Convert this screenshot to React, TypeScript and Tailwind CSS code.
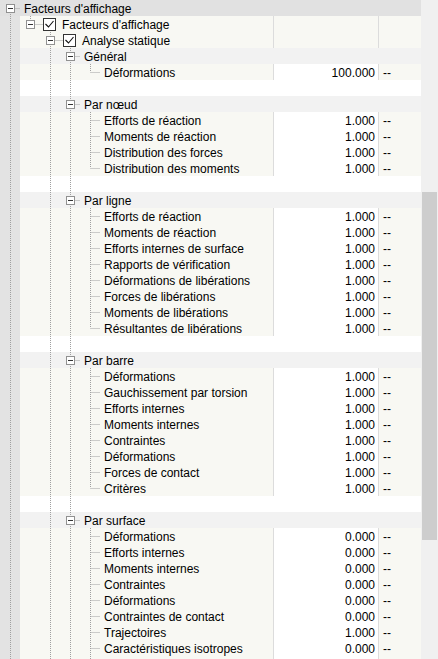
import React from "react";

const LINE = "#a0a0a0";

type Group = { label: string; items: [string, string][] };

const groups: Group[] = [
  { label: "Général", items: [["Déformations", "100.000"]] },
  {
    label: "Par nœud",
    items: [
      ["Efforts de réaction", "1.000"],
      ["Moments de réaction", "1.000"],
      ["Distribution des forces", "1.000"],
      ["Distribution des moments", "1.000"],
    ],
  },
  {
    label: "Par ligne",
    items: [
      ["Efforts de réaction", "1.000"],
      ["Moments de réaction", "1.000"],
      ["Efforts internes de surface", "1.000"],
      ["Rapports de vérification", "1.000"],
      ["Déformations de libérations", "1.000"],
      ["Forces de libérations", "1.000"],
      ["Moments de libérations", "1.000"],
      ["Résultantes de libérations", "1.000"],
    ],
  },
  {
    label: "Par barre",
    items: [
      ["Déformations", "1.000"],
      ["Gauchissement par torsion", "1.000"],
      ["Efforts internes", "1.000"],
      ["Moments internes", "1.000"],
      ["Contraintes", "1.000"],
      ["Déformations", "1.000"],
      ["Forces de contact", "1.000"],
      ["Critères", "1.000"],
    ],
  },
  {
    label: "Par surface",
    items: [
      ["Déformations", "0.000"],
      ["Efforts internes", "0.000"],
      ["Moments internes", "0.000"],
      ["Contraintes", "0.000"],
      ["Déformations", "0.000"],
      ["Contraintes de contact", "0.000"],
      ["Trajectoires", "1.000"],
      ["Caractéristiques isotropes", "0.000"],
    ],
  },
];

function VLine({ x, y1 = 0, y2 = 16 }: { x: number; y1?: number; y2?: number }) {
  return <line x1={x} x2={x} y1={y1} y2={y2} stroke={LINE} strokeDasharray="1 1" />;
}

// tree lines, expander box and checkbox for one row
function TreeArt({
  depth,
  from,
  guides,
  top,
  bottom,
  box,
  check,
  noOwn,
}: {
  depth: number;
  from: number;
  guides: boolean[];
  top?: boolean;
  bottom?: boolean;
  box?: boolean;
  check?: boolean;
  noOwn?: boolean;
}) {
  const off = from * 20;
  const w = 20 * (depth + 1) - off + (check ? 16 : 0);
  const cx = 20 * depth + 10.5 - off;
  const connEnd = 20 * depth + 20 - off + (check ? 3 : 0);
  const cb = 20 * depth + 23 - off;
  return (
    <svg width={w} height={16} className="block shrink-0">
      {guides.map((g, i) =>
        g && i >= from ? <VLine key={i} x={20 * i + 10.5 - off} /> : null
      )}
      {!noOwn && (
        <>
          {top && <VLine x={cx} y1={0} y2={8} />}
          {bottom && <VLine x={cx} y1={8} y2={16} />}
          <line x1={cx} x2={connEnd} y1={8.5} y2={8.5} stroke={LINE} strokeDasharray="1 1" />
          {box && (
            <>
              <rect x={cx - 4} y={4.5} width={8} height={8} fill="#fff" stroke="#919191" />
              <line x1={cx - 2.5} x2={cx + 2.5} y1={8.5} y2={8.5} stroke="#333" />
            </>
          )}
          {check && (
            <>
              <rect x={cb + 0.5} y={2.5} width={12} height={12} fill="#fff" stroke="#333" />
              <path
                d={`M ${cb + 2.5} ${8} L ${cb + 5.5} ${11} L ${cb + 10.5} ${5}`}
                fill="none"
                stroke="#111"
                strokeWidth={1.1}
              />
            </>
          )}
        </>
      )}
    </svg>
  );
}

function Strip() {
  return (
    <div className="w-5 shrink-0 bg-[#e3e3e3]">
      <svg width={20} height={16} className="block">
        <VLine x={10.5} />
      </svg>
    </div>
  );
}

function Cols({ value, white }: { value?: string; white?: boolean }) {
  return (
    <>
      <div className="w-px shrink-0 bg-[#dcdcdc]" />
      <div
        className={`w-[104px] shrink-0 pr-[3px] text-right ${
          white ? "bg-white" : "bg-[#f8f8f3]"
        }`}
      >
        {value}
      </div>
      <div className="w-px shrink-0 bg-[#dcdcdc]" />
      <div className="flex-1 bg-[#f8f8f3] pl-1">{value ? "--" : ""}</div>
    </>
  );
}

export default function App() {
  const g4 = [true, false, true, true];
  const row = "flex h-4 shrink-0 overflow-hidden";
  return (
    <div className="flex h-[659px] w-[438px] overflow-hidden bg-white font-['Liberation_Sans',Arial,sans-serif] text-[12px] leading-[18px] text-black">
      <div className="flex w-[421px] shrink-0 flex-col">
        {/* root */}
        <div className={`${row} bg-[#e1e1e1]`}>
          <TreeArt depth={0} from={0} guides={[]} bottom box />
          <span className="pl-1">Facteurs d'affichage</span>
        </div>
        {/* level 1 */}
        <div className={row}>
          <Strip />
          <div className="flex w-[253px] shrink-0 bg-[#f8f8f3]">
            <TreeArt depth={1} from={1} guides={[true]} top box check />
            <span className="pl-1.5">Facteurs d'affichage</span>
          </div>
          <Cols />
        </div>
        {/* level 2 */}
        <div className={row}>
          <Strip />
          <div className="flex w-[253px] shrink-0 bg-[#f8f8f3]">
            <TreeArt depth={2} from={1} guides={[true, false]} top bottom box check />
            <span className="pl-1.5">Analyse statique</span>
          </div>
          <Cols />
        </div>
        {groups.map((g, gi) => (
          <React.Fragment key={gi}>
            <div className={row}>
              <Strip />
              <div className="flex flex-1 bg-[#f2f2f2]">
                <TreeArt depth={3} from={1} guides={[true, false, true]} top bottom box />
                <span className="pl-1">{g.label}</span>
              </div>
            </div>
            {g.items.map(([name, value], ii) => (
              <div key={ii} className={row}>
                <Strip />
                <div className="flex w-[253px] shrink-0 overflow-hidden whitespace-nowrap bg-[#f8f8f3]">
                  <TreeArt
                    depth={4}
                    from={1}
                    guides={g4}
                    top
                    bottom={ii < g.items.length - 1 || gi === groups.length - 1}
                  />
                  <span className="pl-1">{name}</span>
                </div>
                <Cols value={value} white />
              </div>
            ))}
            {gi < groups.length - 1 ? (
              <div className={row}>
                <Strip />
                <div className="flex flex-1 bg-white">
                  <TreeArt depth={3} from={1} guides={[true, false, true, true]} noOwn />
                </div>
              </div>
            ) : (
              /* next row, scrolled out of view */
              <div className={row}>
                <Strip />
                <div className="flex w-[253px] shrink-0 bg-[#f8f8f3]">
                  <TreeArt depth={4} from={1} guides={g4} top bottom />
                </div>
                <Cols white />
              </div>
            )}
          </React.Fragment>
        ))}
      </div>
      {/* scrollbar */}
      <div className="flex w-[17px] shrink-0 flex-col bg-[#f0f0f0] px-px pt-[192px]">
        <div className="h-[348px] bg-[#cdcdcd]" />
      </div>
    </div>
  );
}
